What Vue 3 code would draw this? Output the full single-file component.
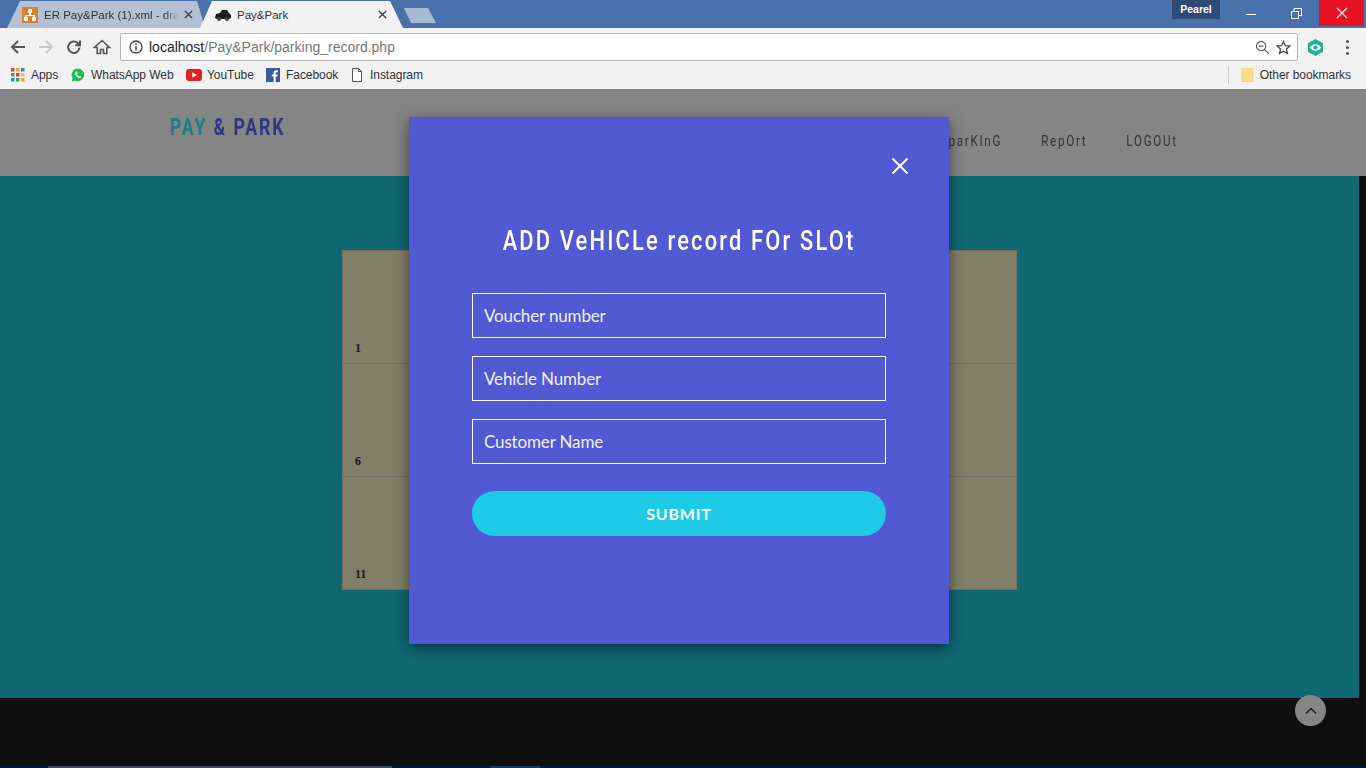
<template>
  <div class="screen">
    <div class="tabstrip">
      <div class="tab tab-off">
        <svg class="fav" viewBox="0 0 16 16">
          <rect width="16" height="16" fill="#d9822b" />
          <path d="M6 2h4v4H9v2h4v2h1v4h-4v-4h1V9H5v1h1v4H2v-4h1V8h4V6H6z" fill="#fff" />
        </svg>
        <span class="tab-title tab-fade">ER Pay&amp;Park (1).xml - dra</span>
        <svg class="tab-x" viewBox="0 0 10 10"><path d="M1 1l8 8M9 1l-8 8" /></svg>
      </div>
      <div class="tab tab-on">
        <svg class="fav" viewBox="0 0 16 16">
          <path d="M0 11l1-4 4-1 2-3h5l2 3 2 2v3l-2 1H2z" fill="#1b1b1b" />
          <circle cx="4" cy="12" r="2" fill="#444" />
          <circle cx="12" cy="12" r="2" fill="#444" />
        </svg>
        <span class="tab-title">Pay&amp;Park</span>
        <svg class="tab-x" viewBox="0 0 10 10"><path d="M1 1l8 8M9 1l-8 8" /></svg>
      </div>
      <div class="tab-new"></div>
      <div class="profile">Pearel</div>
      <div class="win-btn">
        <svg width="11" height="11" viewBox="0 0 11 11"><path d="M0 6.500h10" stroke="#fff" fill="none" /></svg>
      </div>
      <div class="win-btn">
        <svg width="11" height="11" viewBox="0 0 11 11"><path d="M.5 3.500h7v7h-7zM3 3.500V.5h7.500v7h-3" stroke="#fff" fill="none" /></svg>
      </div>
      <div class="win-btn win-close">
        <svg width="12" height="12" viewBox="0 0 12 12"><path d="M1 1l10 10M11 1L1 11" stroke="#fff" stroke-width="1.100" fill="none" /></svg>
      </div>
    </div>

    <div class="toolbar">
      <svg class="tool" viewBox="0 0 18 18"><path d="M16 9H3M9 3L3 9l6 6" /></svg>
      <svg class="tool tool-off" viewBox="0 0 18 18"><path d="M2 9h13M9 3l6 6-6 6" /></svg>
      <svg class="tool" viewBox="0 0 18 18"><path d="M14.500 9.500a5.700 5.700 0 1 1-1.600-4.300L15 7.300M15 2.500v4.800h-4.800" /></svg>
      <svg class="tool tool-home" viewBox="0 0 18 18"><path d="M9 2.500L1.500 9.500h2.700v6h3.300v-4h3v4h3.300v-6h2.700z" /></svg>
      <div class="omnibox">
        <svg class="info" viewBox="0 0 14 14">
          <circle cx="7" cy="7" r="6" fill="none" stroke="#444" stroke-width="1.300" />
          <path d="M7 6v4.500M7 3.500v1.500" stroke="#444" stroke-width="1.500" fill="none" />
        </svg>
        <span class="url"><span class="url-host">localhost</span>/Pay&amp;Park/parking_record.php</span>
        <svg class="omni-icon" viewBox="0 0 16 16">
          <circle cx="6.500" cy="6.500" r="5" fill="none" stroke="#555" stroke-width="1.200" />
          <path d="M4 6.500h5M10 10l4.500 4.500" stroke="#555" stroke-width="1.300" fill="none" />
        </svg>
        <svg class="omni-icon" viewBox="0 0 16 16">
          <path d="M8 1.500l2 4.500 4.800.5-3.600 3.200 1 4.800L8 12l-4.200 2.500 1-4.800L1.200 6.500 6 6z" fill="none" stroke="#444" stroke-width="1.300" />
        </svg>
      </div>
      <svg class="ext" viewBox="0 0 18 18">
        <path d="M9 0l8 4.500v9L9 18l-8-4.500v-9z" fill="#1eb48c" />
        <path d="M3 9c3.500-4.500 8.500-4.500 12 0-3.500 4.500-8.500 4.500-12 0z" fill="#fff" />
        <circle cx="9" cy="9" r="2.200" fill="#1a9fb0" />
      </svg>
      <div class="kebab"><i></i><i></i><i></i></div>
    </div>

    <div class="bookmarks">
      <div class="bm bm-apps">
        <svg class="bm-icon" viewBox="0 0 14 14">
          <rect x="0" y="0" width="3.500" height="3.500" fill="#e0403a" />
          <rect x="5" y="0" width="3.500" height="3.500" fill="#e8a33a" />
          <rect x="10" y="0" width="3.500" height="3.500" fill="#3b7de0" />
          <rect x="0" y="5" width="3.500" height="3.500" fill="#3fa757" />
          <rect x="5" y="5" width="3.500" height="3.500" fill="#e0403a" />
          <rect x="10" y="5" width="3.500" height="3.500" fill="#e8c43a" />
          <rect x="0" y="10" width="3.500" height="3.500" fill="#3b7de0" />
          <rect x="5" y="10" width="3.500" height="3.500" fill="#3fa757" />
          <rect x="10" y="10" width="3.500" height="3.500" fill="#e8a33a" />
        </svg>
        Apps
      </div>
      <div class="bm bm-wa">
        <svg class="bm-icon" viewBox="0 0 14 14">
          <path d="M7 .5a6.300 6.300 0 0 0-5.400 9.600L.7 13.400l3.400-.9A6.300 6.300 0 1 0 7 .5z" fill="#1cc04f" />
          <path d="M4.800 3.600c-1 .8-1 2.200.2 3.800 1.200 1.600 2.600 2.800 4 2.600 1-.2 1.400-1 1.300-1.500L8.900 7.700l-.8.800c-.8-.3-1.800-1.300-2.100-2.100l.7-.8-.8-2z" fill="#fff" />
        </svg>
        WhatsApp Web
      </div>
      <div class="bm bm-yt">
        <svg class="bm-icon bm-wide" viewBox="0 0 16 12">
          <rect width="16" height="12" rx="3" fill="#dc2222" />
          <path d="M6.300 3.200L11 6l-4.700 2.800z" fill="#fff" />
        </svg>
        YouTube
      </div>
      <div class="bm bm-fb">
        <svg class="bm-icon" viewBox="0 0 14 14">
          <rect width="14" height="14" fill="#3a5a9b" />
          <path d="M9.700 14V8.600h1.700l.3-2.100h-2V5.200c0-.6.200-1 1-1h1.100V2.300c-.2 0-.8-.1-1.500-.1-1.600 0-2.700 1-2.700 2.700v1.600H5.800v2.100h1.800V14z" fill="#fff" />
        </svg>
        Facebook
      </div>
      <div class="bm bm-ig">
        <svg class="bm-icon" viewBox="0 0 14 14">
          <path d="M2.500.5h6l3 3v10h-9zM8.500.5v3h3" fill="#fff" stroke="#555" />
        </svg>
        Instagram
      </div>
      <div class="bm-spacer"></div>
      <div class="bm-divider"></div>
      <div class="bm bm-other">
        <svg class="bm-icon bm-folder" viewBox="0 0 14 14">
          <path d="M1 0h11v14H1z" fill="#fbe08a" stroke="#e8c868" stroke-width=".6" />
        </svg>
        Other bookmarks
      </div>
    </div>

    <div class="page">
      <header class="site-head">
        <div class="logo"><span class="logo-pay">PAY</span> &amp; PARK</div>
        <nav class="site-nav">
          <a>parKInG</a>
          <a>RepOrt</a>
          <a>LOGOUt</a>
        </nav>
      </header>
      <main class="site-main">
        <div class="slots">
          <div v-for="n in 15" :key="n" class="slot"><b>{{ n }}</b></div>
        </div>
      </main>
      <footer class="site-foot">
        <div class="foot-strip">
          <span class="strip-a"></span>
          <span class="strip-b"></span>
        </div>
      </footer>
      <div class="to-top">
        <svg width="14" height="14" viewBox="0 0 14 14"><path d="M2 9.500L7 4.500l5 5" fill="none" stroke="#333" stroke-width="1.400" /></svg>
      </div>

      <div class="overlay">
        <div class="modal">
          <div class="modal-close">
            <svg width="18" height="18" viewBox="0 0 18 18"><path d="M1.500 1.500l15 15M16.500 1.500l-15 15" stroke="#fff" stroke-width="2" fill="none" /></svg>
          </div>
          <h2 class="modal-title"><span>ADD VeHICLe record FOr SLOt</span></h2>
          <form class="modal-form" @submit.prevent>
            <input v-for="f in fields" :key="f" class="field" type="text" :placeholder="f" />
            <button class="submit" type="submit">SUBMIT</button>
          </form>
        </div>
      </div>
    </div>
  </div>
</template>

<script setup>
const fields = ['Voucher number', 'Vehicle Number', 'Customer Name']
</script>

<style>
html, body {
  margin: 0;
  overflow: hidden;
}
</style>

<style scoped>
.screen {
  width: 1366px;
  height: 768px;
  display: flex;
  flex-direction: column;
  overflow: hidden;
  font-family: "Open Sans", "Liberation Sans", sans-serif;
}

/* browser chrome */
.tabstrip {
  height: 28px;
  background: #4a71ab;
  display: flex;
  align-items: flex-end;
  padding: 0 2px 0 7px;
  box-sizing: border-box;
  flex: none;
}
.tab {
  height: 27px;
  display: flex;
  align-items: center;
  box-sizing: border-box;
  font: 11.500px "Liberation Sans", sans-serif;
  color: #333;
}
.tab-off {
  width: 198px;
  padding: 0 12px 0 15px;
  background: #b4c0d3;
  clip-path: polygon(0 100%, 13px 0, 190px 0, 198px 100%);
}
.tab-on {
  width: 203px;
  margin-left: -5px;
  padding: 0 16px 0 15px;
  background: #f2f2f2;
  clip-path: polygon(0 100%, 12px 0, 190px 0, 203px 100%);
}
.fav {
  width: 16px;
  height: 16px;
  flex: none;
  margin-right: 6px;
}
.tab-title {
  flex: 1;
  white-space: nowrap;
}
.tab-fade {
  -webkit-mask-image: linear-gradient(90deg, #000 88%, transparent 100%);
  mask-image: linear-gradient(90deg, #000 88%, transparent 100%);
}
.tab-x {
  width: 9px;
  height: 9px;
  flex: none;
  margin-left: 4px;
  fill: none;
  stroke: #444;
  stroke-width: 1.600;
}
.tab-new {
  width: 32px;
  height: 15px;
  margin: 0 0 5px 1px;
  background: #a9bad4;
  clip-path: polygon(0 0, 24px 0, 100% 100%, 7px 100%);
}
.profile {
  width: 48px;
  height: 19px;
  margin: 0 9px 0 auto;
  align-self: flex-start;
  background: #2f4a75;
  color: #fff;
  font: bold 10.500px/18px "Liberation Sans", sans-serif;
  text-align: center;
}
.win-btn {
  width: 45px;
  height: 26px;
  align-self: flex-start;
  display: flex;
  align-items: center;
  justify-content: center;
}
.win-close {
  background: #e81123;
}

.toolbar {
  height: 34px;
  background: #f2f2f2;
  display: flex;
  align-items: center;
  padding: 4px 0 0 9px;
  box-sizing: border-box;
  flex: none;
}
.tool {
  width: 18px;
  height: 18px;
  margin-right: 10px;
  fill: none;
  stroke: #555;
  stroke-width: 2;
  flex: none;
}
.tool-off {
  stroke: #c8c8c8;
}
.tool-home {
  stroke-width: 1.600;
}
.omnibox {
  width: 1178px;
  height: 28px;
  margin-left: -1px;
  background: #fff;
  border: 1px solid #b6b6b6;
  border-radius: 2px;
  box-sizing: border-box;
  display: flex;
  align-items: center;
  padding: 0 6px 0 8px;
}
.info {
  width: 14px;
  height: 14px;
  flex: none;
  margin-right: 6px;
}
.url {
  flex: 1;
  font: 14px "Liberation Sans", sans-serif;
  color: #777;
}
.url-host {
  color: #222;
}
.omni-icon {
  width: 15px;
  height: 15px;
  margin-left: 6px;
  flex: none;
}
.ext {
  width: 17px;
  height: 17px;
  margin-left: 9px;
  flex: none;
}
.kebab {
  display: flex;
  flex-direction: column;
  gap: 3px;
  margin-left: 22px;
}
.kebab i {
  width: 3px;
  height: 3px;
  background: #555;
  border-radius: 50%;
}

.bookmarks {
  height: 27px;
  background: #f2f2f2;
  display: flex;
  align-items: center;
  padding: 0 15px 1px 11px;
  box-sizing: border-box;
  flex: none;
  font: 12px "Liberation Sans", sans-serif;
  letter-spacing: -0.050px;
  color: #333;
}
.bm {
  display: flex;
  align-items: center;
  white-space: nowrap;
}
.bm-icon {
  width: 14px;
  height: 14px;
  margin-right: 6px;
  flex: none;
}
.bm-wide {
  width: 16px;
  height: 12px;
  margin-right: 5px;
}
.bm-folder {
  margin-right: 5px;
}
.bm-apps {
  width: 60px;
}
.bm-wa {
  width: 115px;
}
.bm-yt {
  width: 80px;
}
.bm-fb {
  width: 84px;
}
.bm-spacer {
  flex: 1;
}
.bm-divider {
  width: 1px;
  height: 17px;
  background: #ccc;
  margin-right: 12px;
}

/* the page below */
.page {
  position: relative;
  flex: 1;
  min-height: 0;
  display: flex;
  flex-direction: column;
  background: #1d1d1d;
}
.site-head {
  height: 87px;
  flex: none;
  background: #fff;
  display: flex;
  box-sizing: border-box;
  padding: 0 188px 0 170px;
  justify-content: space-between;
  font-family: Roboto, sans-serif;
}
.logo {
  margin-top: 24px;
  font-size: 24px;
  font-weight: 700;
  letter-spacing: 2.500px;
  white-space: nowrap;
  color: #6266f4;
  transform: scaleX(0.74);
  transform-origin: left center;
  height: 28px;
}
.logo-pay {
  color: #3af0ff;
}
.site-nav {
  display: flex;
  gap: 52px;
  margin-top: 43px;
  height: 20px;
  font-size: 15.500px;
  letter-spacing: 2.300px;
  color: #666;
  transform: scaleX(0.75);
  transform-origin: right center;
}
.site-main {
  width: 1359px;
  height: 522px;
  flex: none;
  background: #1fc8dd;
  padding-top: 74px;
  box-sizing: border-box;
}
.slots {
  width: 675px;
  height: 340px;
  margin: 0 auto;
  display: grid;
  grid-template-columns: repeat(5, 1fr);
  grid-template-rows: 113px 113px 1fr;
  background: #f6f4c8;
  border: 1px solid #dedccb;
  box-sizing: border-box;
}
.slot {
  display: flex;
  align-items: flex-end;
  padding: 0 0 7px 12px;
  border-bottom: 1px solid #d2d1be;
  font: bold 12px "Liberation Serif", serif;
  color: #333;
}
.slot:nth-last-child(-n + 5) {
  border-bottom: 0;
}
.site-foot {
  flex: 1;
  display: flex;
  flex-direction: column;
  justify-content: flex-end;
}
.foot-strip {
  height: 2px;
  background: #0c2d66;
  display: flex;
}
.strip-a {
  width: 344px;
  margin-left: 48px;
  background: #7c8cb0;
}
.strip-b {
  width: 49px;
  margin-left: 99px;
  background: #2f6bc4;
}
.to-top {
  position: absolute;
  left: 1295px;
  top: 606px;
  width: 31px;
  height: 31px;
  border-radius: 50%;
  background: #fff;
  display: flex;
  align-items: center;
  justify-content: center;
}
.overlay {
  position: absolute;
  inset: 0;
  background: rgba(0, 0, 0, 0.48);
}
.modal {
  position: absolute;
  left: 409px;
  top: 28px;
  width: 540px;
  height: 527px;
  background: #5159d3;
  box-shadow: 0 4px 14px rgba(0, 0, 0, 0.5);
  box-sizing: border-box;
  padding: 0 63px;
}
.modal-close {
  position: absolute;
  right: 40px;
  top: 40px;
  width: 18px;
  height: 18px;
}
.modal-title {
  margin: 106px 0 0;
  height: 34px;
  display: flex;
  justify-content: center;
  white-space: nowrap;
  font: 500 28px/35px Roboto, sans-serif;
  letter-spacing: 2.800px;
  color: #fff;
  transform: scaleX(0.78);
}
.modal-form {
  margin-top: 36px;
  display: flex;
  flex-direction: column;
  gap: 18px;
}
.field {
  width: 414px;
  height: 45px;
  box-sizing: border-box;
  padding: 0 11px;
  background: transparent;
  border: 1px solid #fff;
  outline: 0;
  font: 17px Lato, sans-serif;
  letter-spacing: -0.150px;
  color: #fff;
}
.field::placeholder {
  color: #f0f0fa;
  opacity: 1;
}
.submit {
  height: 45px;
  margin-top: 9px;
  border: 0;
  border-radius: 23px;
  background: #1ecbe6;
  color: #fff;
  font: 700 16px Lato, sans-serif;
  letter-spacing: 0.800px;
}
</style>
